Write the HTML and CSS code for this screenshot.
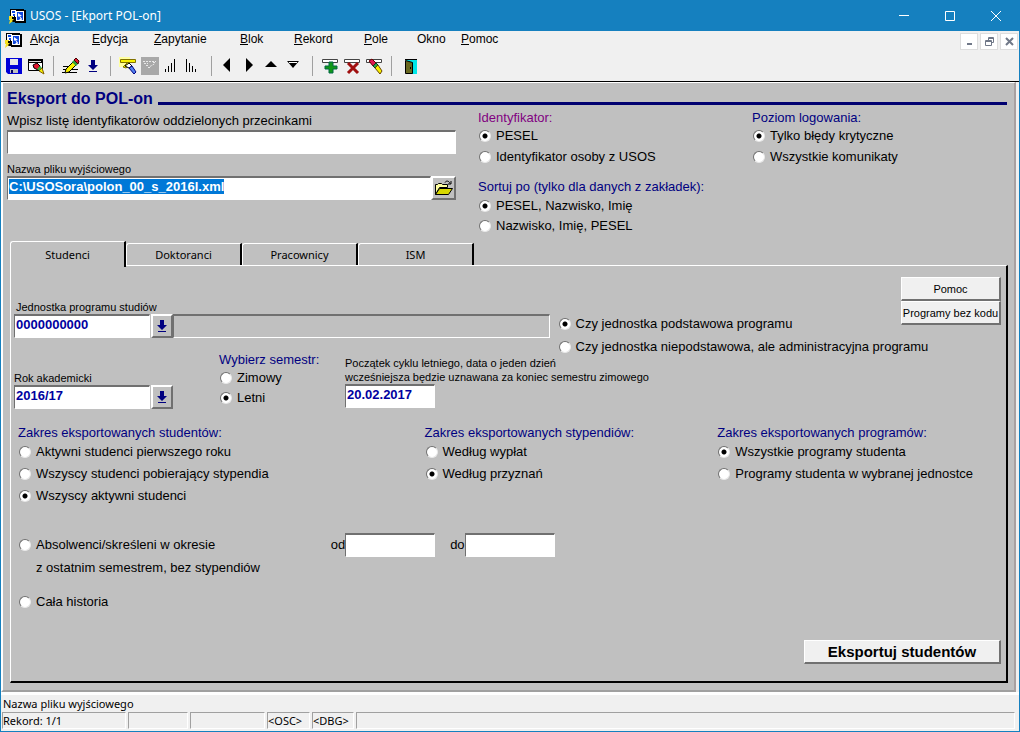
FILE: index.html
```
<!DOCTYPE html>
<html lang="pl">
<head>
  <meta charset="UTF-8">
  <meta name="viewport" content="width=device-width, initial-scale=1.0">
  <title>USOS - [Ekport POL-on]</title>
  <link rel="stylesheet" href="styles.css">
</head>
<body>
  <svg class="sprite" width="0" height="0" aria-hidden="true">
    <symbol id="logo" viewBox="0 0 17 16">
      <path fill="#000" d="M1 1h14v1h2v13H6v-1H3v-3H1z"/>
      <path fill="#fff" d="M2 2h5v7H2zM7 3h8v10H7z"/>
      <path fill="#1048e0" d="M3 3h3v2H3zM8 4h6v8h-1l-1-2-2 2H8zM4 6h2v2H4z"/>
      <path fill="#fff" d="M9 5l4 3h-2l2 3h-1l-2-3-1 1z"/>
      <path fill="#f4e020" d="M0 8h4v1H3v2h2l-2 2h1l-4 3 1-4H0z"/>
      <path fill="#000" d="M5 8h1v6H5z"/>
    </symbol>
    <symbol id="arrow-down" viewBox="0 0 10 13">
      <path fill="#000080" d="M3 0h4v5h3L5 10 0 5h3zM1 11h8v1H1z"/>
    </symbol>
  </svg>

  <div class="window">
    <header class="titlebar">
      <svg class="logo"><use href="#logo"/></svg>
      <span class="title">USOS - [Ekport POL-on]</span>
      <button type="button" aria-label="Minimalizuj"><svg width="12" height="12" viewBox="0 0 12 12"><path d="M1 5.500h10"/></svg></button>
      <button type="button" aria-label="Maksymalizuj"><svg width="12" height="12" viewBox="0 0 12 12"><path d="M1.500 1.500h9v9h-9z"/></svg></button>
      <button type="button" aria-label="Zamknij"><svg width="12" height="12" viewBox="0 0 12 12"><path d="M1 1l10 10M11 1L1 11"/></svg></button>
    </header>

    <nav class="menubar">
      <svg class="logo"><use href="#logo"/></svg>
      <div class="menu">
        <a href="#"><u>A</u>kcja</a>
        <a href="#"><u>E</u>dycja</a>
        <a href="#"><u>Z</u>apytanie</a>
        <a href="#"><u>B</u>lok</a>
        <a href="#"><u>R</u>ekord</a>
        <a href="#"><u>P</u>ole</a>
        <a href="#">Okno</a>
        <a href="#"><u>P</u>omoc</a>
      </div>
      <div class="mdi">
        <button type="button" aria-label="Minimalizuj okno"><svg width="9" height="9" viewBox="0 0 9 9"><path d="M2 7h5" stroke-width="2"/></svg></button>
        <button type="button" aria-label="Przywróć okno"><svg width="9" height="9" viewBox="0 0 9 9"><path d="M3.500 3V.5h5v5H7M.5 3.500h6v5h-6zM1 4.500h5M4 1.500h4"/></svg></button>
        <button type="button" aria-label="Zamknij okno"><svg width="9" height="9" viewBox="0 0 9 9"><path d="M1 1l7 7M8 1L1 8" stroke-width="2"/></svg></button>
      </div>
    </nav>

    <div class="toolbar">
      <button type="button" aria-label="Zapisz"><svg viewBox="0 0 18 18">
        <path fill="#0000d8" d="M1 1h16v16H3l-2-2z"/><path fill="#e8e8e8" d="M5 2h8v6H5z"/><path fill="#c0c0c0" d="M5 12h8v4H5z"/><path fill="#000060" d="M6 13h2v3H6z"/></svg></button>
      <button type="button" aria-label="Ekran"><svg viewBox="0 0 18 18">
        <path fill="#fff" stroke="#000" d="M1.500 3.500h14v10h-14z"/><path fill="#000" d="M1 2h15v4H1z"/><path fill="#ddd" d="M2 4h12v1H2z"/>
        <path fill="#e01830" stroke="#000" d="M6 8l4-2 3 3-2 4-4-2z"/><path fill="#40b040" d="M10 12l3-3 2 2-2 3z"/><path fill="#f8f000" stroke="#806000" d="M12 14l3-3 2 6z"/></svg></button>
      <span class="sep"></span>
      <button type="button" aria-label="Edytuj"><svg viewBox="0 0 18 18">
        <path stroke="#000" fill="none" d="M1 9.500h8M1 12.500h4M8 12.500h8M0 15.500h3M5 15.500h10"/>
        <path fill="#f8f000" stroke="#000" d="M4 12l8-8 3 3-8 8-4 1z"/><path fill="#30a040" d="M10 5l2-2 4 4-2 2z"/><path fill="#e01830" stroke="#400" d="M12 3l2-2 3 3-1 3z"/></svg></button>
      <button type="button" aria-label="Lista wartości"><svg viewBox="0 0 18 18">
        <path fill="#000080" d="M7 3h4v5h3l-5 5-5-5h3zM5 14h8v1H5z"/></svg></button>
      <span class="sep"></span>
      <button type="button" aria-label="Wprowadź zapytanie"><svg viewBox="0 0 18 18">
        <path fill="#ffffa0" d="M0 0h11v10H0z"/><path fill="#f8f000" stroke="#807000" d="M1.500 2.500h15v3h-15z"/>
        <path fill="#f8f000" stroke="#807000" d="M4 10l5-5 2 3-4 3z"/><path fill="#fff" stroke="#000" d="M6 9l4-3 3 3-3 2z"/><path fill="#5080f0" stroke="#000080" d="M10 11l3-2 4 6-2 2z"/></svg></button>
      <button type="button" aria-label="Wykonaj zapytanie" disabled><svg viewBox="0 0 18 18">
        <path fill="#a8a8a8" d="M0 0h18v18H0z"/><path stroke="#e8e8e8" fill="none" stroke-dasharray="2 1" d="M2 4.500h13M3 6.500h4M5 8.500h3M7 10.500h3M9 9.500l5-3M12 5.500h3"/></svg></button>
      <button type="button" aria-label="Sortuj rosnąco"><svg viewBox="0 0 18 18">
        <path stroke="#000" fill="none" d="M2.500 15v-3M5.500 15V9M8.500 15V6M11.500 15V2"/></svg></button>
      <button type="button" aria-label="Sortuj malejąco"><svg viewBox="0 0 18 18">
        <path stroke="#000" fill="none" d="M1.500 2v13M4.500 6v9M7.500 9v6M10.500 12v3"/></svg></button>
      <span class="sep"></span>
      <button type="button" aria-label="Poprzedni blok"><svg viewBox="0 0 18 18"><path d="M3 8l7-7v14z"/></svg></button>
      <button type="button" aria-label="Następny blok"><svg viewBox="0 0 18 18"><path d="M11 8L4 1v14z"/></svg></button>
      <button type="button" aria-label="Poprzedni rekord"><svg viewBox="0 0 18 18"><path d="M1 10l6-6 6 6z"/></svg></button>
      <button type="button" aria-label="Następny rekord"><svg viewBox="0 0 18 18"><path d="M1 4l6 7 6-7z"/><path stroke="#fff" d="M3 5.500h8"/></svg></button>
      <span class="sep"></span>
      <button type="button" aria-label="Wstaw rekord"><svg viewBox="0 0 18 18">
        <path fill="#fff" stroke="#444" d="M1.500 2.500h15v3h-15z"/><path fill="#109818" stroke="#064" d="M8 5h4v4h4v3h-4v4H8v-4H4V9h4z"/></svg></button>
      <button type="button" aria-label="Usuń rekord"><svg viewBox="0 0 18 18">
        <path fill="#fff" stroke="#444" d="M1.500 2.500h15v3h-15z"/><path fill="none" stroke="#a01010" stroke-width="3" d="M5 6l10 10M15 6L5 16"/></svg></button>
      <button type="button" aria-label="Wyczyść rekord"><svg viewBox="0 0 18 18">
        <path fill="#fff" stroke="#444" d="M1.500 2.500h15v3h-15z"/><path fill="#e01850" stroke="#600" d="M4 4l3-2 4 4-3 3z"/><path fill="#30a040" stroke="#042" d="M8 9l3-3 2 2-3 3z"/><path fill="#f8f000" stroke="#640" d="M10 11l3-3 4 6-2 3z"/></svg></button>
      <span class="sep"></span>
      <button type="button" aria-label="Wyjście"><svg viewBox="0 0 18 18">
        <path fill="#00e8e8" d="M6 3h11v14h-7z"/><path fill="#000" d="M5 2h12v1H5z"/><path fill="#686820" stroke="#000" d="M5.500 3.500l7 2v11h-7z"/><path fill="#000" d="M10 10h1v2h-1z"/></svg></button>
    </div>

    <main class="canvas">
      <h1>Eksport do POL-on</h1>

      <div class="top">
        <div class="files">
          <label for="lista">Wpisz listę identyfikatorów oddzielonych przecinkami</label>
          <input type="text" id="lista">
          <label for="plik" class="small">Nazwa pliku wyjściowego</label>
          <div class="with-button">
            <input type="text" id="plik" value="C:\USOSora\polon_00_s_2016l.xml">
            <button type="button" class="pick" aria-label="Wybierz plik"><svg width="18" height="16" viewBox="0 0 18 16">
              <path fill="#ffffa0" stroke="#000" d="M.5 14.500v-10h2l1-1h3l1 1h5v3h-8z"/><path fill="#d8d800" stroke="#000" d="M.5 14.500l4-6h13l-4 6z"/><path fill="none" stroke="#000" d="M10 2.500c1-2 4-2 5 1M16 1v3h-3"/></svg></button>
          </div>
        </div>
        <div>
          <fieldset class="tall">
            <legend class="plum">Identyfikator:</legend>
            <label><input type="radio" name="ident" checked>PESEL</label>
            <label><input type="radio" name="ident">Identyfikator osoby z USOS</label>
          </fieldset>
          <fieldset class="sort">
            <legend>Sortuj po (tylko dla danych z zakładek):</legend>
            <label><input type="radio" name="sort" checked>PESEL, Nazwisko, Imię</label>
            <label><input type="radio" name="sort">Nazwisko, Imię, PESEL</label>
          </fieldset>
        </div>
        <fieldset class="tall">
          <legend>Poziom logowania:</legend>
          <label><input type="radio" name="log" checked>Tylko błędy krytyczne</label>
          <label><input type="radio" name="log">Wszystkie komunikaty</label>
        </fieldset>
      </div>

      <div class="tabs" role="tablist">
        <button type="button" role="tab" class="active" aria-selected="true">Studenci</button>
        <button type="button" role="tab">Doktoranci</button>
        <button type="button" role="tab">Pracownicy</button>
        <button type="button" role="tab">ISM</button>
      </div>

      <section class="panel">
        <div class="unit">
          <div class="unit-field">
            <label for="jednostka" class="small">Jednostka programu studiów</label>
            <div class="with-button">
              <input type="text" id="jednostka" class="code" value="0000000000">
              <button type="button" class="pick" aria-label="Lista jednostek"><svg width="10" height="13"><use href="#arrow-down"/></svg></button>
              <input type="text" class="readonly" aria-label="Nazwa jednostki" readonly>
            </div>
          </div>
          <fieldset class="unit-kind">
            <label><input type="radio" name="rodzaj" checked>Czy jednostka podstawowa programu</label>
            <label><input type="radio" name="rodzaj">Czy jednostka niepodstawowa, ale administracyjna programu</label>
          </fieldset>
          <div class="side-buttons">
            <button type="button">Pomoc</button>
            <button type="button">Programy bez kodu</button>
          </div>
        </div>

        <div class="term">
          <div class="year">
            <label for="rok" class="small">Rok akademicki</label>
            <div class="with-button">
              <input type="text" id="rok" class="code" value="2016/17">
              <button type="button" class="pick" aria-label="Lista lat"><svg width="10" height="13"><use href="#arrow-down"/></svg></button>
            </div>
          </div>
          <fieldset>
            <legend>Wybierz semestr:</legend>
            <label><input type="radio" name="semestr">Zimowy</label>
            <label><input type="radio" name="semestr" checked>Letni</label>
          </fieldset>
          <div class="cycle">
            <label for="poczatek" class="small">Początek cyklu letniego, data o jeden dzień<br>wcześniejsza będzie uznawana za koniec semestru zimowego</label>
            <input type="text" id="poczatek" class="date" value="20.02.2017">
          </div>
        </div>

        <div class="scope">
          <fieldset>
            <legend>Zakres eksportowanych studentów:</legend>
            <label><input type="radio" name="studenci">Aktywni studenci pierwszego roku</label>
            <label><input type="radio" name="studenci">Wszyscy studenci pobierający stypendia</label>
            <label><input type="radio" name="studenci" checked>Wszyscy aktywni studenci</label>
          </fieldset>
          <fieldset>
            <legend>Zakres eksportowanych stypendiów:</legend>
            <label><input type="radio" name="stypendia">Według wypłat</label>
            <label><input type="radio" name="stypendia" checked>Według przyznań</label>
          </fieldset>
          <fieldset>
            <legend>Zakres eksportowanych programów:</legend>
            <label><input type="radio" name="programy" checked>Wszystkie programy studenta</label>
            <label><input type="radio" name="programy">Programy studenta w wybranej jednostce</label>
          </fieldset>
        </div>

        <div class="period">
          <label class="choice"><input type="radio" name="studenci">Absolwenci/skreśleni w okresie</label>
          <div class="range">
            <label for="od">od</label><input type="text" id="od" class="date">
            <label for="do">do</label><input type="text" id="do" class="date">
          </div>
        </div>
        <p class="note">z ostatnim semestrem, bez stypendiów</p>
        <label class="choice history"><input type="radio" name="studenci">Cała historia</label>

        <div class="actions">
          <button type="button">Eksportuj studentów</button>
        </div>
      </section>
    </main>

    <footer class="status">
      <div class="hint">Nazwa pliku wyjściowego</div>
      <div class="cells">
        <span>Rekord: 1/1</span><span></span><span></span><span>&lt;OSC&gt;</span><span>&lt;DBG&gt;</span><span></span>
      </div>
    </footer>
  </div>

  <script>
    document.getElementById('plik').select();
  </script>
</body>
</html>
```
FILE: styles.css
```
* {
  box-sizing: border-box;
}
body {
  margin: 0;
  font-family: "Liberation Sans", Arial, sans-serif;
  font-size: 13px;
  line-height: 16px;
  color: #000;
}
button, input {
  font: inherit;
  color: inherit;
}
button {
  padding: 0;
}
svg {
  display: block;
}
.sprite {
  position: absolute;
}
.window {
  display: flex;
  flex-direction: column;
  min-height: 100vh;
  border: 1px solid #1580bf;
  border-top: 0;
  background: #f0f0f0;
}

/* title bar */
.titlebar {
  display: flex;
  align-items: center;
  height: 31px;
  padding-left: 8px;
  background: #1580bf;
  color: #fff;
  font-family: "Noto Sans", sans-serif;
  font-size: 12px;
}
.logo {
  width: 17px;
  height: 16px;
  flex: none;
}
.title {
  flex: 1;
  margin-left: 4px;
}
.titlebar button {
  display: grid;
  place-items: center;
  width: 46px;
  height: 30px;
  border: 0;
  background: none;
}
.titlebar svg path {
  fill: none;
  stroke: #fff;
}
.titlebar .logo path {
  stroke: none;
}

/* menu */
.menubar {
  display: flex;
  height: 20px;
  padding-left: 4px;
}
.menu {
  display: grid;
  grid-template-columns: 62px 62px 86px 54px 70px 53px 44px auto;
  flex: 1;
  justify-content: start;
  margin-left: 8px;
  font-size: 12px;
}
.menu a {
  color: #000;
  text-decoration: none;
}
.menubar .logo {
  margin-top: 1px;
}
.mdi {
  display: flex;
  gap: 2px;
  padding: 2px 1px 0 0;
}
.mdi button {
  display: grid;
  place-items: center;
  width: 18px;
  height: 17px;
  border: 1px solid #ddd;
  background: #fff;
}
.mdi path {
  fill: none;
  stroke: #707888;
}

/* toolbar */
.toolbar {
  display: flex;
  align-items: center;
  height: 31px;
  padding-left: 2px;
  border-bottom: 1px solid #000;
}
.toolbar button {
  width: 22px;
  height: 22px;
  border: 0;
  background: none;
}
.toolbar svg {
  width: 18px;
  height: 18px;
  margin: 0 auto;
}
.sep {
  width: 1px;
  height: 20px;
  margin: 0 6px;
  background: #a0a0a0;
}

/* form canvas */
.canvas {
  display: flex;
  flex-direction: column;
  flex: 1;
  margin-right: 3px;
  padding: 5px 6px 7px 4px;
  border: solid #fff;
  border-width: 1px 0 0 2px;
  border-right: 2px solid #a8a0a0;
  border-bottom: 2px solid #a0a0a0;
  background: #c0c0c0;
}
h1 {
  display: flex;
  align-items: center;
  gap: 5px;
  height: 22px;
  margin: 0;
  font-size: 16px;
  color: #000080;
  white-space: nowrap;
}
h1::after {
  content: "";
  flex: 1;
  height: 3px;
  margin: 9px 1px 0 0;
  background: #000070;
}
.top {
  display: grid;
  grid-template-columns: 471fr 274fr 256fr;
}
.files {
  display: flex;
  flex-direction: column;
  margin-right: 22px;
  padding-top: 2px;
}
.files label {
  line-height: 18px;
}
.small,
.files .small {
  display: block;
  font-size: 11px;
  line-height: 14px;
}
.files .small {
  margin-top: 8px;
}
input[type="text"] {
  width: 100%;
  min-width: 0;
  height: 24px;
  padding: 0 0 4px 1px;
  border: 1px solid #fff;
  border-top: 2px solid #707070;
  border-left-color: #707070;
  border-radius: 0;
  outline: 0;
  background: #fff;
  font-weight: bold;
  color: #0000a0;
}
input[type="text"].readonly {
  flex: 1;
  background: #c0c0c0;
}
input[type="text"].code {
  width: 136px;
}
input[type="text"].date {
  width: 90px;
}
input::selection {
  background: #0078d7;
  color: #fff;
}
.with-button {
  display: flex;
}
.code + .pick {
  margin-left: 1px;
}
.pick {
  display: grid;
  place-items: center;
  flex: none;
  width: 22px;
  height: 24px;
  border: 2px solid #707070;
  border-top-color: #fff;
  border-left-color: #fff;
  background: #c0c0c0;
}
.files .pick {
  width: 25px;
}

/* radio groups */
fieldset {
  min-width: 0;
  margin: 0;
  padding: 0;
  border: 0;
}
legend {
  padding: 0;
  color: #000080;
  white-space: nowrap;
}
.plum {
  color: #800080;
}
fieldset label,
.choice {
  display: flex;
  align-items: center;
  height: 20px;
  white-space: nowrap;
}
.tall label {
  height: 21px;
}
.tall label:first-of-type {
  height: 20px;
}
.sort {
  margin-top: 12px;
}
.sort label {
  height: 20px;
}
.sort legend {
  padding-bottom: 1px;
}
input[type="radio"] {
  appearance: none;
  flex: none;
  width: 12px;
  height: 12px;
  margin: 0 5px 0 1px;
  border: 1px solid #e8e8e8;
  border-top-color: #707070;
  border-left-color: #707070;
  border-radius: 50%;
  background: #fff;
}
input[type="radio"]:checked {
  background: radial-gradient(circle, #000 2px, #fff 3px);
}

/* tabs */
.tabs {
  display: flex;
  align-items: flex-end;
  margin: 5px 0 0 3px;
}
.tabs button {
  width: 116px;
  height: 22px;
  border: 0 solid #fff;
  border-width: 1px 2px 0 1px;
  border-right-color: #000;
  border-radius: 3px 0 0 0;
  background: #c0c0c0;
  font-family: "Noto Sans", sans-serif;
  font-size: 11px;
}
.tabs .active {
  position: relative;
  height: 26px;
  margin-bottom: -2px;
}
.panel {
  display: flex;
  flex-direction: column;
  flex: 1;
  margin-left: 3px;
  padding: 11px 5px 17px 3px;
  border: 1px solid #fff;
  border-right: 2px solid #000;
  border-bottom: 2px solid #000;
}

/* study unit */
.unit {
  display: grid;
  grid-template-columns: 543fr 343fr 100px;
}
.unit-field {
  padding: 23px 8px 0 0;
}
.unit-field .small {
  padding-left: 2px;
}
.unit-kind {
  padding-top: 35px;
}
.unit-kind label {
  height: 23px;
}
.side-buttons button,
.actions button {
  display: block;
  width: 100%;
  height: 24px;
  border: 1px solid #fff;
  border-right: 2px solid #707070;
  border-bottom: 2px solid #707070;
  background: #f0f0f0;
  font-size: 11px;
  white-space: nowrap;
}

/* term */
.term {
  display: grid;
  grid-template-columns: 205fr 126fr 656fr;
  margin-top: -6px;
}
.year {
  padding-top: 19px;
}
.cycle {
  padding-top: 4px;
}

/* export scope */
.scope {
  display: grid;
  grid-template-columns: 407fr 293fr 284fr;
  margin: 16px 0 0 4px;
}
.scope label {
  height: 22px;
}
.period {
  display: grid;
  grid-template-columns: 313fr 671fr;
  margin: 26px 0 0 4px;
  align-items: center;
}
.range {
  display: flex;
  align-items: center;
}
.range .date + label {
  margin-left: 15px;
}
.note {
  margin: 0 0 0 22px;
  line-height: 22px;
}
.history {
  margin: 13px 0 0 4px;
}
.actions {
  display: flex;
  justify-content: flex-end;
  margin-top: auto;
}
.actions button {
  width: 197px;
  font-size: 15px;
  font-weight: bold;
}

/* status bar */
.status {
  border-top: 3px solid #fff;
  font-family: "Noto Sans", sans-serif;
  font-size: 11px;
}
.hint {
  padding-left: 2px;
  line-height: 17px;
}
.cells {
  display: grid;
  grid-template-columns: 124px 60px 75px 43px 42px 1fr;
  gap: 2px;
  margin: 0 4px 2px 1px;
}
.cells span {
  height: 17px;
  border: 1px solid #fff;
  border-top-color: #a0a0a0;
  border-left-color: #a0a0a0;
  line-height: 15px;
  white-space: nowrap;
}
```
